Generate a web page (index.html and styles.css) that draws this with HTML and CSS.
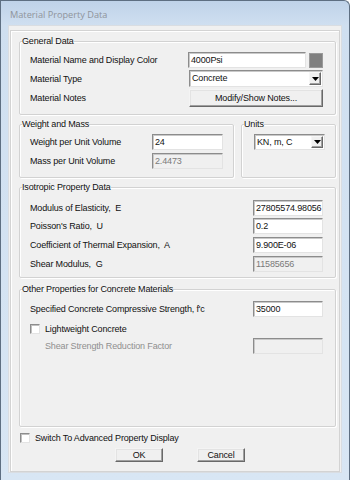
FILE: index.html
```html
<!DOCTYPE html>
<html>
<head>
<meta charset="utf-8">
<link rel="stylesheet" href="styles.css">
</head>
<body>
<div class="window">
  <div class="titlebar"><span class="title">Material Property Data</span></div>
  <div class="client">
    <div class="panel">
      <fieldset class="group general">
        <legend>General Data</legend>
        <div class="row h16">
          <span class="lbl">Material Name and Display Color</span>
          <div class="ctrls">
            <div class="field w118">4000Psi</div>
            <div class="swatch"></div>
          </div>
        </div>
        <div class="row h17">
          <span class="lbl">Material Type</span>
          <div class="combo w134"><span class="combo-text">Concrete</span><span class="drop"><svg width="7" height="4" viewBox="0 0 7 4"><path d="M0 0h7L3.5 4z" fill="#000"/></svg></span></div>
        </div>
        <div class="row h18">
          <span class="lbl">Material Notes</span>
          <div class="btn w134">Modify/Show Notes...</div>
        </div>
      </fieldset>

      <div class="pair">
        <fieldset class="group weight">
          <legend>Weight and Mass</legend>
          <div class="row h16">
            <span class="lbl">Weight per Unit Volume</span>
            <div class="field w71">24</div>
          </div>
          <div class="row h16 gap3">
            <span class="lbl">Mass per Unit Volume</span>
            <div class="field w71 disabled">2.4473</div>
          </div>
        </fieldset>
        <fieldset class="group units">
          <legend>Units</legend>
          <div class="combo w71 h16"><span class="combo-text">KN, m, C</span><span class="drop"><svg width="7" height="4" viewBox="0 0 7 4"><path d="M0 0h7L3.5 4z" fill="#000"/></svg></span></div>
        </fieldset>
      </div>

      <fieldset class="group iso">
        <legend>Isotropic Property Data</legend>
        <div class="row h16">
          <span class="lbl">Modulus of Elasticity,&nbsp; E</span>
          <div class="field w70">27805574.98056</div>
        </div>
        <div class="row h16 gap2">
          <span class="lbl">Poisson's Ratio,&nbsp; U</span>
          <div class="field w70">0.2</div>
        </div>
        <div class="row h16 gap3">
          <span class="lbl">Coefficient of Thermal Expansion,&nbsp; A</span>
          <div class="field w70">9.900E-06</div>
        </div>
        <div class="row h16 gap3">
          <span class="lbl">Shear Modulus,&nbsp; G</span>
          <div class="field w70 disabled">11585656</div>
        </div>
      </fieldset>

      <fieldset class="group other">
        <legend>Other Properties for Concrete Materials</legend>
        <div class="row h16">
          <span class="lbl">Specified Concrete Compressive Strength, f'c</span>
          <div class="field w70">35000</div>
        </div>
        <div class="check-row light">
          <span class="box"></span><span class="check-lbl">Lightweight Concrete</span>
        </div>
        <div class="row h16 indent">
          <span class="lbl grey">Shear Strength Reduction Factor</span>
          <div class="field w70 disabled"></div>
        </div>
      </fieldset>

      <div class="check-row switch">
        <span class="box"></span><span class="check-lbl">Switch To Advanced Property Display</span>
      </div>

      <div class="buttons">
        <div class="btn push">OK</div>
        <div class="btn push">Cancel</div>
      </div>
    </div>
  </div>
</div>
</body>
</html>
```

FILE: styles.css
```css
* { box-sizing: border-box; }
html, body { margin: 0; padding: 0; }
body {
  width: 350px;
  height: 480px;
  overflow: hidden;
  background: #ffffff;
  font-family: "Liberation Sans", Arial, sans-serif;
  font-size: 9px;
  letter-spacing: -0.15px;
  color: #111;
}
.window {
  width: 350px;
  height: 480px;
  border-left: 1px solid #5e6f82;
  border-top: 1px solid #5e6f82;
  border-right: 1px solid #5e6f82;
  border-radius: 0 6px 0 0;
  background: linear-gradient(#bfd3e9 0px, #cfdff0 24px, #d8e6f4 480px);
  padding: 0 7px 0 7px;
  display: flex;
  flex-direction: column;
}
.titlebar {
  height: 24px;
  flex: none;
  display: flex;
  align-items: center;
  padding-left: 2px;
  padding-top: 2px;
}
.title {
  font-family: "Open Sans", "Noto Sans", sans-serif;
  font-size: 9.2px;
  letter-spacing: 0;
  color: #8f949b;
}
.client {
  width: 334px;
  height: 448px;
  flex: none;
  background: #f0f0f0;
  border: 1px solid #d9dde2;
  padding: 4px 1px 1px 1px;
}
.panel {
  height: 442px;
  border: 1px solid #d3d3d3;
  box-shadow: inset 1px 1px 0 #ffffff;
  padding: 0 3px 0 8px;
  display: flex;
  flex-direction: column;
}
.group {
  margin: 0;
  border: 1px solid #d2d2d2;
  border-radius: 2px;
  box-shadow: inset 1px 1px 0 #ffffff, 1px 1px 0 #ffffff;
  padding: 0;
  min-width: 0;
}
.group legend {
  padding: 0;
  margin-left: -8px;
  height: 12px;
  line-height: 12px;
}
.units legend { margin-left: -10px; }
.general { margin-top: 4px; padding: 5px 12px 7px 10px; }
.pair { margin-top: 3px; display: flex; gap: 7px; }
.weight { width: 215px; padding: 4px 10px 8px 10px; }
.units { flex: 1; padding: 4px 12px 8px 12px; }
.iso { margin-top: 3px; padding: 7px 12px 5px 10px; }
.other { margin-top: 5px; padding: 6px 12px 72px 10px; }

.row {
  display: flex;
  align-items: center;
  justify-content: space-between;
}
.general .row + .row { margin-top: 2px; }
.h16 { height: 16px; }
.h17 { height: 17px; }
.h18 { height: 18px; }
.gap2 { margin-top: 2px; }
.gap3 { margin-top: 3px; }
.lbl { white-space: nowrap; }
.grey { color: #8f8f8f; }
.indent { padding-left: 15px; }

.ctrls { display: flex; gap: 3px; align-items: center; }
.field {
  height: 16px;
  background: #fff;
  border: 1px solid;
  border-color: #8c8c8c #e3e3e3 #e3e3e3 #8c8c8c;
  box-shadow: inset 1px 1px 0 #c9c9c9;
  padding: 0 0 0 2px;
  line-height: 14px;
  white-space: nowrap;
  overflow: hidden;
}
.field.disabled {
  background: #f0f0f0;
  color: #7a7a7a;
}
.w118 { width: 118px; }
.w134 { width: 134px; }
.w71 { width: 71px; }
.w70 { width: 70px; }
.swatch {
  width: 14px;
  height: 15px;
  background: #808080;
  border: 1px solid #9a9a9a;
}
.combo {
  height: 17px;
  background: #fff;
  border: 1px solid;
  border-color: #8c8c8c #e3e3e3 #e3e3e3 #8c8c8c;
  box-shadow: inset 1px 1px 0 #c9c9c9;
  display: flex;
  align-items: stretch;
  justify-content: space-between;
  padding: 1px 1px 1px 2px;
}
.combo.h16 { height: 16px; }
.combo-text { line-height: 13px; white-space: nowrap; }
.drop {
  width: 12px;
  background: #f0f0f0;
  border: 1px solid;
  border-color: #f7f7f7 #696969 #696969 #f7f7f7;
  box-shadow: inset -1px -1px 0 #a0a0a0;
  display: flex;
  align-items: center;
  justify-content: center;
}
.btn {
  height: 18px;
  background: #f0f0f0;
  border: 1px solid;
  border-color: #f4f4f4 #696969 #696969 #f4f4f4;
  box-shadow: inset -1px -1px 0 #a0a0a0, inset 1px 1px 0 #e3e3e3;
  display: flex;
  align-items: center;
  justify-content: center;
  white-space: nowrap;
}
.check-row {
  display: flex;
  align-items: center;
  height: 10px;
}
.box {
  width: 10px;
  height: 10px;
  background: #fff;
  border: 1px solid;
  border-color: #8c8c8c #e3e3e3 #e3e3e3 #8c8c8c;
  box-shadow: inset 1px 1px 0 #c0c0c0;
  flex: none;
}
.check-lbl { margin-left: 5px; white-space: nowrap; }
.light { margin-top: 7px; }
.light + .row { margin-top: 4px; }
.switch { margin-top: 6px; padding-left: 1px; }
.buttons {
  margin-top: 5px;
  display: flex;
  justify-content: center;
  gap: 34px;
  padding-left: 5px;
}
.btn.push { width: 48px; height: 14px; }
```
